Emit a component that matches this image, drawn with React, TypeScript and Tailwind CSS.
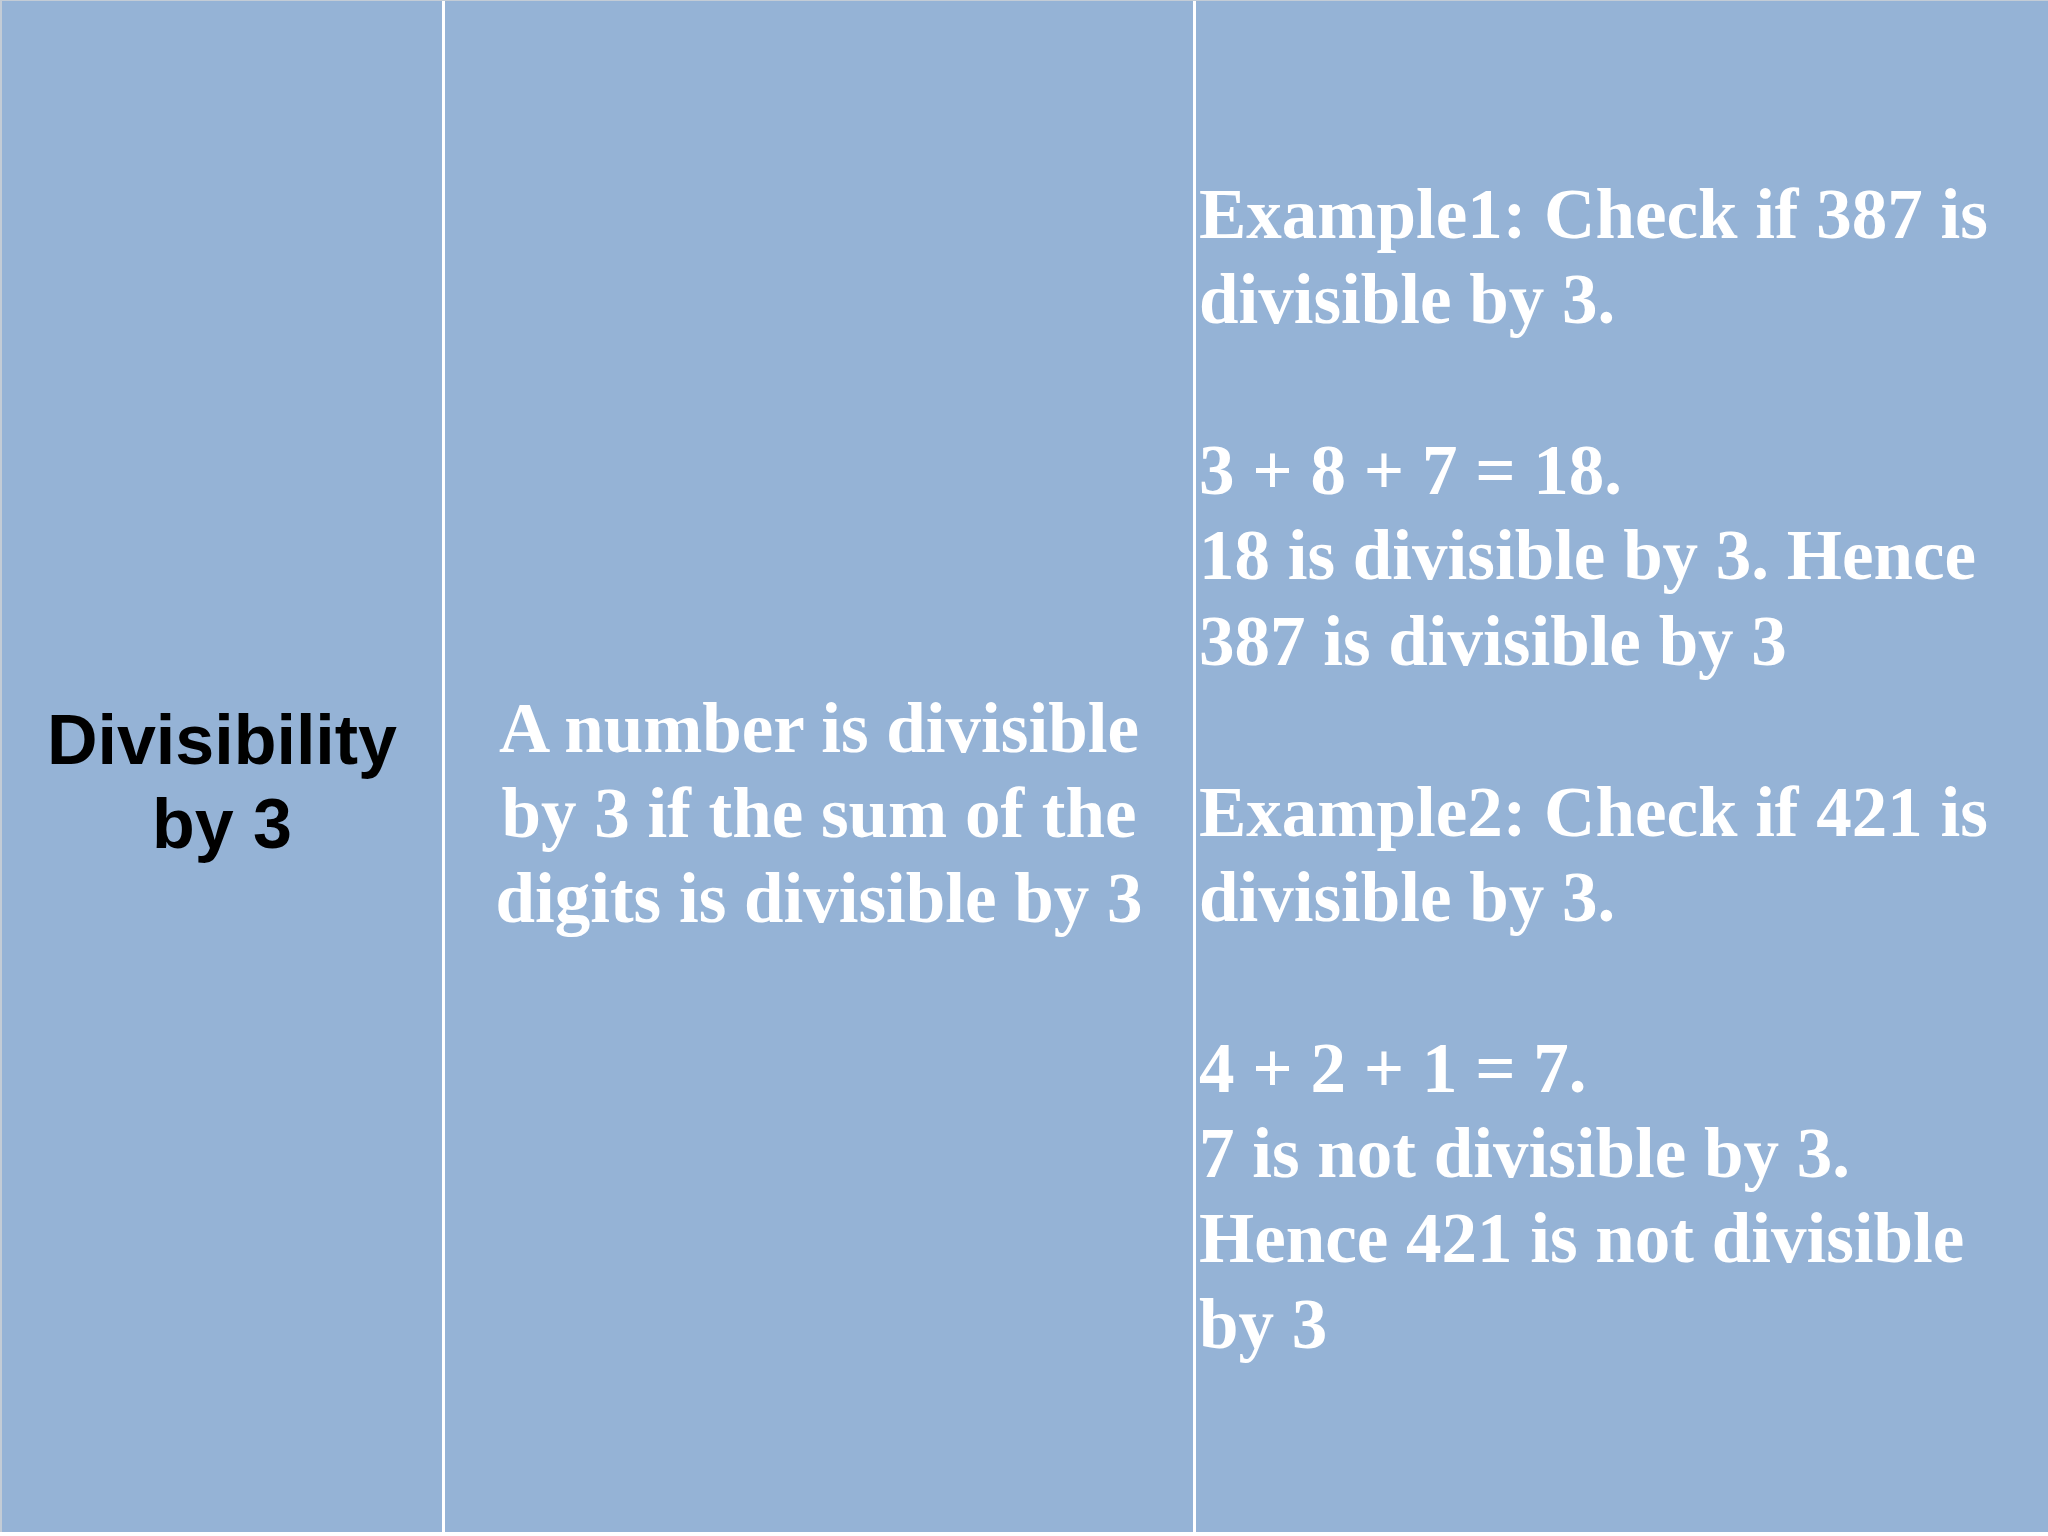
import React from "react"

const serif = { fontFamily: '"Liberation Serif", "Times New Roman", serif' }

const exampleLines = [
  "Example1: Check if 387 is",
  "divisible by 3.",
  "",
  "3 + 8 + 7 = 18.",
  "18 is divisible by 3. Hence",
  "387 is divisible by 3",
  "",
  "Example2: Check if 421 is",
  "divisible by 3.",
  "",
  "4 + 2 + 1 = 7.",
  "7 is not divisible by 3.",
  "Hence 421 is not divisible",
  "by 3",
]

const ruleLines = ["A number is divisible", "by 3 if the sum of the", "digits is divisible by 3"]

export default function App() {
  return (
    <div className="w-[2048px] h-[1536px] bg-white overflow-hidden">
      <div className="flex h-[1532px] gap-[3px] border-t border-l-2 border-[#c3ccd6] bg-white">
        {/* title cell */}
        <div className="w-[440px] shrink-0 bg-[#95b3d6] flex items-center justify-center pt-[30px]">
          <div
            className="text-[70px] leading-[84px] font-bold text-black text-center"
            style={{ fontFamily: '"Liberation Sans", Arial, sans-serif' }}
          >
            Divisibility
            <br />
            by 3
          </div>
        </div>

        {/* rule cell */}
        <div className="w-[748px] shrink-0 bg-[#95b3d6] flex items-center justify-center pt-[94px]">
          <div className="text-[71px] leading-[85px] font-bold text-white text-center whitespace-nowrap" style={serif}>
            {ruleLines.map((line) => (
              <div key={line}>{line}</div>
            ))}
          </div>
        </div>

        {/* examples cell */}
        <div className="flex-1 bg-[#95b3d6] flex items-center pl-[3px] pt-[6px]">
          <div className="text-[71px] leading-[85.4px] font-bold text-white whitespace-nowrap" style={serif}>
            {exampleLines.map((line, i) => (
              <div key={i} className="h-[85.4px]">
                {line}
              </div>
            ))}
          </div>
        </div>
      </div>
    </div>
  )
}
